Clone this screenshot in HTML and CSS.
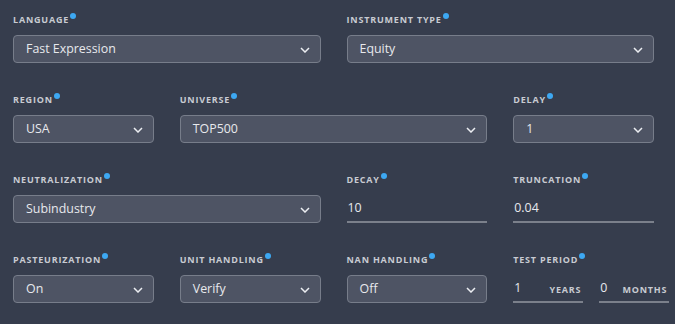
FILE: index.html
```html
<!DOCTYPE html>
<html lang="en">
<head>
<meta charset="utf-8">
<title>Simulation settings</title>
<link rel="stylesheet" href="styles.css">
</head>
<body>
<form class="settings">
  <div class="field span-2">
    <label class="label">Language<span class="dot"></span></label>
    <div class="select"><span class="value">Fast Expression</span><svg class="chev" viewBox="0 0 10 6"><path d="M1 1 L5 5 L9 1"/></svg></div>
  </div>
  <div class="field span-2">
    <label class="label">Instrument Type<span class="dot"></span></label>
    <div class="select"><span class="value">Equity</span><svg class="chev" viewBox="0 0 10 6"><path d="M1 1 L5 5 L9 1"/></svg></div>
  </div>

  <div class="field">
    <label class="label">Region<span class="dot"></span></label>
    <div class="select"><span class="value">USA</span><svg class="chev" viewBox="0 0 10 6"><path d="M1 1 L5 5 L9 1"/></svg></div>
  </div>
  <div class="field span-2">
    <label class="label">Universe<span class="dot"></span></label>
    <div class="select"><span class="value">TOP500</span><svg class="chev" viewBox="0 0 10 6"><path d="M1 1 L5 5 L9 1"/></svg></div>
  </div>
  <div class="field">
    <label class="label">Delay<span class="dot"></span></label>
    <div class="select"><span class="value">1</span><svg class="chev" viewBox="0 0 10 6"><path d="M1 1 L5 5 L9 1"/></svg></div>
  </div>

  <div class="field span-2">
    <label class="label">Neutralization<span class="dot"></span></label>
    <div class="select"><span class="value">Subindustry</span><svg class="chev" viewBox="0 0 10 6"><path d="M1 1 L5 5 L9 1"/></svg></div>
  </div>
  <div class="field">
    <label class="label">Decay<span class="dot"></span></label>
    <div class="line-input"><span class="value">10</span></div>
  </div>
  <div class="field">
    <label class="label">Truncation<span class="dot"></span></label>
    <div class="line-input"><span class="value">0.04</span></div>
  </div>

  <div class="field">
    <label class="label">Pasteurization<span class="dot"></span></label>
    <div class="select"><span class="value">On</span><svg class="chev" viewBox="0 0 10 6"><path d="M1 1 L5 5 L9 1"/></svg></div>
  </div>
  <div class="field">
    <label class="label">Unit Handling<span class="dot"></span></label>
    <div class="select"><span class="value">Verify</span><svg class="chev" viewBox="0 0 10 6"><path d="M1 1 L5 5 L9 1"/></svg></div>
  </div>
  <div class="field">
    <label class="label">NaN Handling<span class="dot"></span></label>
    <div class="select"><span class="value">Off</span><svg class="chev" viewBox="0 0 10 6"><path d="M1 1 L5 5 L9 1"/></svg></div>
  </div>
  <div class="field">
    <label class="label">Test Period<span class="dot"></span></label>
    <div class="period">
      <div class="line-input period-item"><span class="value">1</span><span class="unit">Years</span></div>
      <div class="line-input period-item"><span class="value">0</span><span class="unit">Months</span></div>
    </div>
  </div>
</form>
</body>
</html>
```
FILE: styles.css
```css
html, body {
  margin: 0;
  padding: 0;
  background: #363d4d;
  height: 100%;
}
body {
  font-family: "Open Sans", "Noto Sans", "Liberation Sans", sans-serif;
  color: #e8e9ed;
  overflow: hidden;
}
.settings {
  display: grid;
  grid-template-columns: repeat(4, minmax(0, 1fr));
  column-gap: 26px;
  row-gap: 31px;
  padding: 14px 21px 0 13px;
  width: 641px;
}
.field {
  display: flex;
  flex-direction: column;
  min-width: 0;
}
.span-2 {
  grid-column: span 2;
}
.label {
  display: block;
  height: 12px;
  line-height: 12px;
  font-size: 9px;
  font-weight: 700;
  letter-spacing: 0.8px;
  text-transform: uppercase;
  color: #c8cbd2;
  margin-bottom: 9px;
  white-space: nowrap;
}
.dot {
  display: inline-block;
  width: 6px;
  height: 6px;
  border-radius: 50%;
  background: #3da8f2;
  vertical-align: top;
  margin-left: 1px;
  margin-top: -1px;
}
.select {
  box-sizing: border-box;
  height: 28px;
  border: 1px solid #777d8a;
  border-radius: 4px;
  background: #4e5464;
  display: flex;
  align-items: center;
  justify-content: space-between;
  padding: 0 10px 0 12px;
}
.value {
  font-size: 12.4px;
  line-height: 18px;
  color: #e8e9ed;
}
.chev {
  width: 10px;
  height: 6px;
  margin-top: 2px;
  fill: none;
  stroke: #eceef2;
  stroke-width: 1.5;
}
.line-input {
  box-sizing: border-box;
  height: 28px;
  border-bottom: 2px solid #7b808b;
  display: flex;
  align-items: center;
  padding: 0 0 0 1px;
}
.period {
  display: flex;
  gap: 16px;
}
.period-item {
  flex: 0 0 70px;
  justify-content: space-between;
  padding-right: 2px;
}
.unit {
  font-size: 9px;
  font-weight: 700;
  letter-spacing: 0.8px;
  text-transform: uppercase;
  color: #c8cbd2;
  margin-top: 3px;
}
```
